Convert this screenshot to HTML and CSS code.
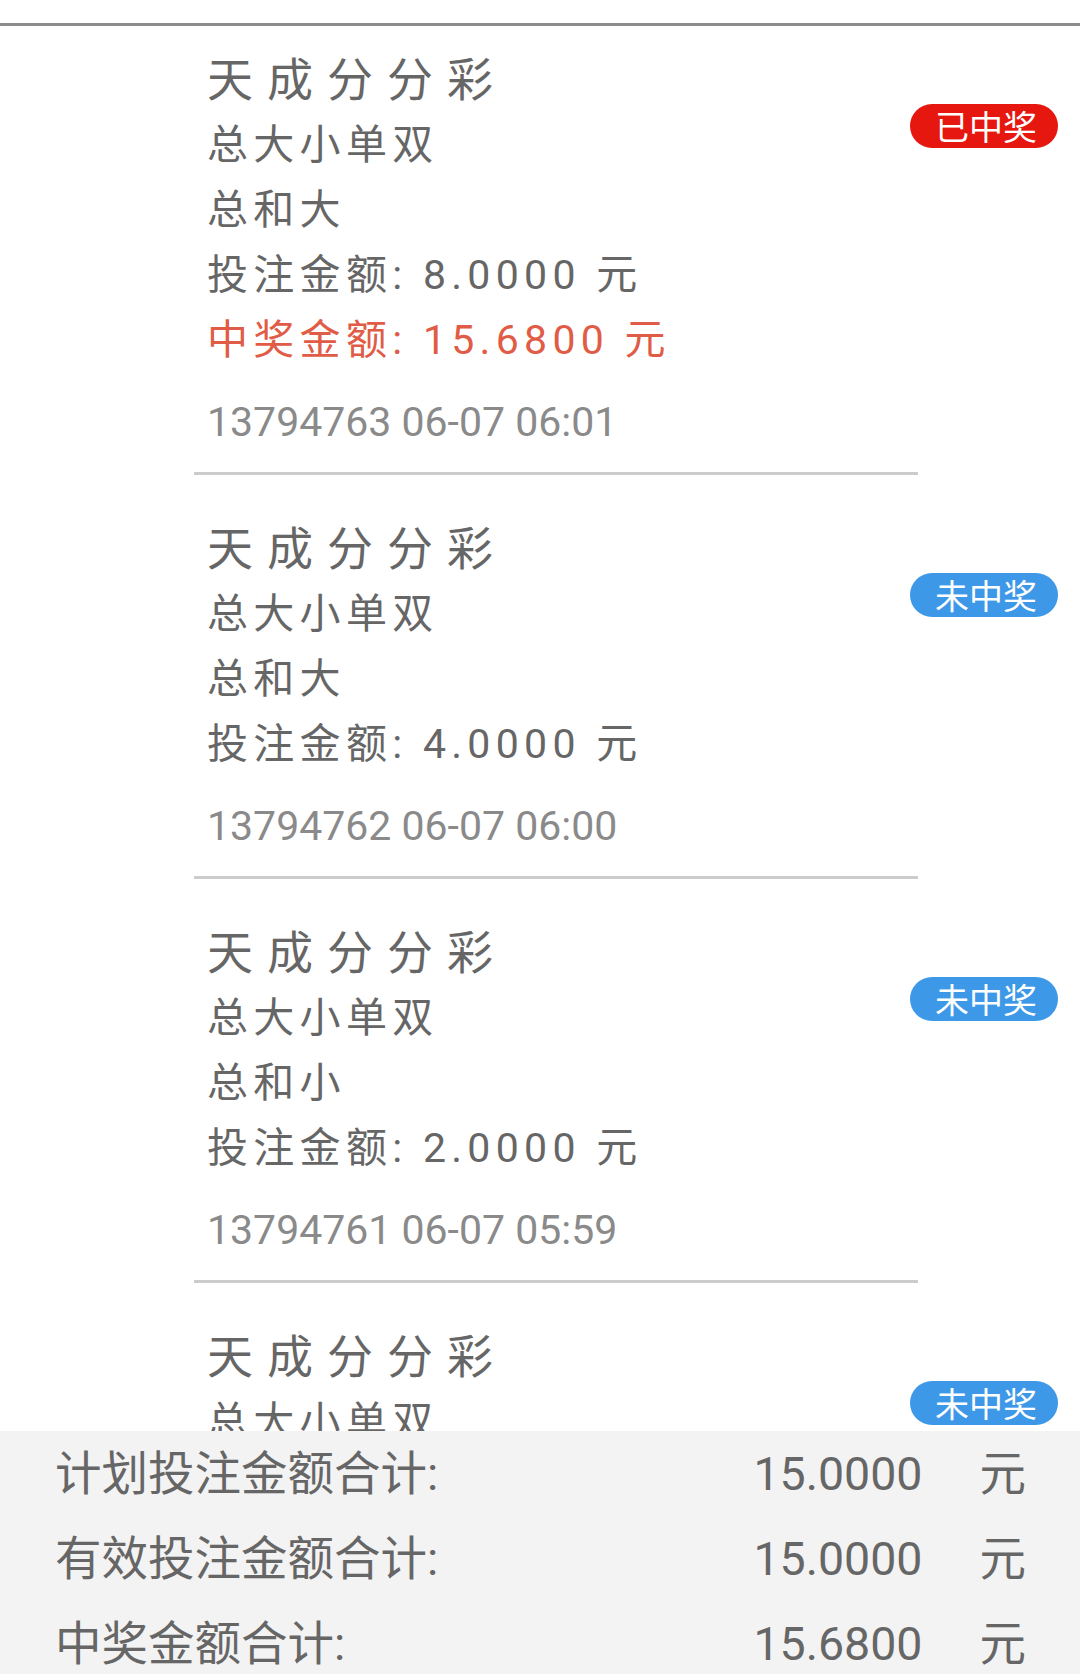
FILE: index.html
```html
<!DOCTYPE html>
<html lang="zh-CN">
<head>
<meta charset="utf-8">
<title>投注记录</title>
<link rel="stylesheet" href="styles.css">
</head>
<body>
<div class="page">
  <div class="topbar"></div>
  <div class="list-viewport">
    <div class="list">
      <div class="row">
        <div class="card">
          <div class="title">天成分分彩</div>
          <div class="line">总大小单双</div>
          <div class="line">总和大</div>
          <div class="line">投注金额: 8.0000 元</div>
          <div class="line win">中奖金额: 15.6800 元</div>
          <div class="stamp">13794763 06-07 06:01</div>
        </div>
        <span class="badge badge-win">已中奖</span>
      </div>
      <div class="row">
        <div class="card">
          <div class="title">天成分分彩</div>
          <div class="line">总大小单双</div>
          <div class="line">总和大</div>
          <div class="line">投注金额: 4.0000 元</div>
          <div class="stamp">13794762 06-07 06:00</div>
        </div>
        <span class="badge badge-lose">未中奖</span>
      </div>
      <div class="row">
        <div class="card">
          <div class="title">天成分分彩</div>
          <div class="line">总大小单双</div>
          <div class="line">总和小</div>
          <div class="line">投注金额: 2.0000 元</div>
          <div class="stamp">13794761 06-07 05:59</div>
        </div>
        <span class="badge badge-lose">未中奖</span>
      </div>
      <div class="row">
        <div class="card">
          <div class="title">天成分分彩</div>
          <div class="line">总大小单双</div>
          <div class="line">总和大</div>
          <div class="line">投注金额: 1.0000 元</div>
          <div class="stamp">13794760 06-07 05:58</div>
        </div>
        <span class="badge badge-lose">未中奖</span>
      </div>
    </div>
  </div>
  <div class="summary">
    <div class="sum-row">
      <span class="sum-label">计划投注金额合计:</span>
      <span class="sum-value">15.0000</span>
      <span class="sum-unit">元</span>
    </div>
    <div class="sum-row">
      <span class="sum-label">有效投注金额合计:</span>
      <span class="sum-value">15.0000</span>
      <span class="sum-unit">元</span>
    </div>
    <div class="sum-row">
      <span class="sum-label">中奖金额合计:</span>
      <span class="sum-value">15.6800</span>
      <span class="sum-unit">元</span>
    </div>
  </div>
</div>
</body>
</html>
```
FILE: styles.css
```css
html, body {
  margin: 0;
  padding: 0;
  background: #ffffff;
}

body {
  font-family: Roboto, "Noto Sans CJK SC", "Noto Sans", sans-serif;
  color: #666666;
}

.page {
  width: 1080px;
  height: 1674px;
  display: flex;
  flex-direction: column;
  overflow: hidden;
}

.topbar {
  height: 23px;
  flex: 0 0 23px;
  border-bottom: 3px solid #8c8c8c;
  background: #ffffff;
}

.list-viewport {
  flex: 1 1 auto;
  overflow: hidden;
}

.list {
  margin-top: -20px;
}

.row {
  position: relative;
}

.card {
  margin-left: 194px;
  width: 711px;
  padding: 42px 0 21px 13px;
  border-bottom: 3px solid #cccccc;
}

.title {
  font-size: 46px;
  line-height: 65px;
  letter-spacing: 14px;
  color: #666666;
  white-space: nowrap;
}

.line {
  font-size: 41px;
  line-height: 65px;
  letter-spacing: 5.3px;
  color: #666666;
  white-space: nowrap;
}

.line.win {
  color: #e15c46;
}

.stamp {
  margin-top: 21px;
  font-size: 41px;
  line-height: 57px;
  color: #8a8a8a;
  white-space: nowrap;
}

.badge {
  position: absolute;
  top: 98px;
  right: 22px;
  width: 148px;
  height: 44px;
  border-radius: 22px;
  box-sizing: border-box;
  padding-left: 4px;
  display: flex;
  align-items: center;
  justify-content: center;
  font-family: "Noto Sans CJK SC", sans-serif;
  font-size: 34px;
  line-height: 44px;
  color: #ffffff;
}

.badge-win {
  background: #e5170f;
}

.badge-lose {
  background: #3d98e8;
}

.summary {
  flex: 0 0 243px;
  height: 243px;
  background: #f3f3f3;
  overflow: hidden;
}

.sum-row {
  height: 85px;
  display: flex;
  align-items: center;
  padding: 0 54px 0 55px;
  font-size: 46.5px;
  color: #666666;
  white-space: nowrap;
}

.sum-label {
  flex: 1 1 auto;
  margin-bottom: 8px;
}

.sum-value {
  flex: 0 0 auto;
  text-align: right;
  font-size: 46.5px;
}

.sum-unit {
  flex: 0 0 auto;
  margin-left: 57px;
  margin-bottom: 8px;
}
```
